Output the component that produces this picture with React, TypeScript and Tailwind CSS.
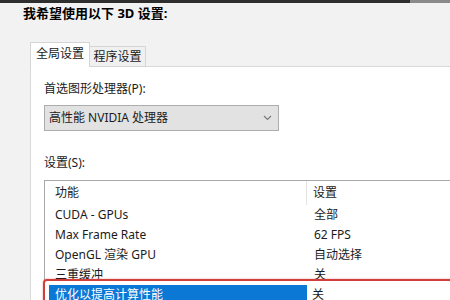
import React from "react";

const font = { fontFamily: '"Noto Sans", "Noto Sans CJK SC", sans-serif' };

const rows: [string, string][] = [
  ["CUDA - GPUs", "全部"],
  ["Max Frame Rate", "62 FPS"],
  ["OpenGL 渲染 GPU", "自动选择"],
  ["三重缓冲", "关"],
];

export default function App() {
  return (
    <div
      className="relative w-[450px] h-[300px] overflow-hidden bg-[#f2f2f2] flex flex-col text-[#1b1b1b]"
      style={font}
    >
      <div className="flex h-[3px] shrink-0">
        <div className="w-[410px] bg-[#2e2e2e]" />
        <div className="flex-1 bg-[#8a8a8a]" />
      </div>
      <div className="h-[20px] pl-[23px] flex items-center text-[13px] font-bold text-black leading-none shrink-0">
        我希望使用以下 3D 设置:
      </div>
      <div className="h-[19px] shrink-0" />
      <div className="flex items-end ml-[30px] h-[25px] shrink-0 relative z-10 -mb-px">
        <div className="h-[25px] w-[60px] bg-white border border-b-0 border-[#d5d5d5] flex items-center justify-center text-[12px] leading-none pb-[2px]">
          全局设置
        </div>
        <div className="h-[21px] w-[56px] bg-[#f0f0f0] border border-l-0 border-[#d5d5d5] flex items-center justify-center text-[12px] leading-none">
          程序设置
        </div>
      </div>
      <div className="ml-[30px] flex-1 bg-white border-l border-t border-[#d9d9d9] pl-[13px] flex flex-col">
        <div className="mt-[14px] h-[16px] flex items-center text-[12px] leading-none">
          首选图形处理器(P):
        </div>
        <div className="mt-[8px] w-[235px] h-[26px] bg-[#e2e2e2] border border-[#adadad] flex items-center justify-between pl-[4px] pr-[6px] text-[12px] leading-none">
          <span>高性能 NVIDIA 处理器</span>
          <svg width="9" height="6" viewBox="0 0 9 6">
            <path d="M1 1 L4.5 4.5 L8 1" fill="none" stroke="#7a7a7a" strokeWidth="1.2" />
          </svg>
        </div>
        <div className="mt-[24px] h-[16px] flex items-center text-[12px] leading-none">
          设置(S):
        </div>
        <div className="mt-[9px] flex-1 border-l border-t border-[#a9a9a9] flex flex-col text-[12px] leading-none">
          <div className="h-[24px] flex shrink-0">
            <div className="w-[262px] pl-[10px] flex items-center border-r border-[#e3e3e3]">功能</div>
            <div className="pl-[6px] flex items-center">设置</div>
          </div>
          {rows.map(([a, b]) => (
            <div key={a} className="h-[20px] flex shrink-0 pl-[4px]">
              <div className="w-[258px] pl-[6px] flex items-center">{a}</div>
              <div className="pl-[7px] flex items-center">{b}</div>
            </div>
          ))}
          <div className="h-[20px] flex shrink-0 pl-[4px]">
            <div className="w-[258px] pl-[6px] flex items-center bg-[#0a78d4] text-white">优化以提高计算性能</div>
            <div className="pl-[5px] flex items-center">关</div>
          </div>
        </div>
      </div>
      <div className="absolute left-[43px] top-[279px] w-[420px] h-[40px] border-2 border-[#d23f3a] rounded-[4px] shadow-[0_0_2px_rgba(200,40,40,0.5)]" />
    </div>
  );
}
